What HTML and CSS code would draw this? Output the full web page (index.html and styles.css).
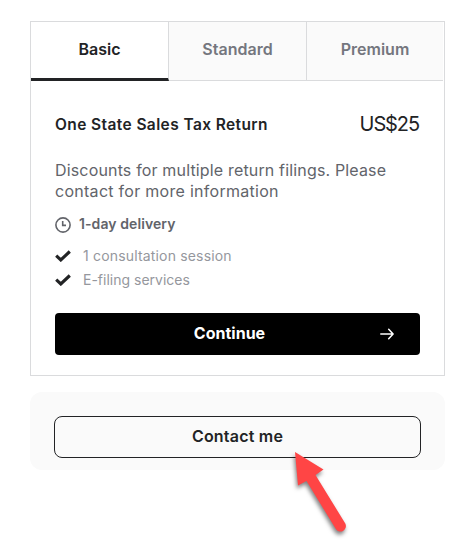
FILE: index.html
```html
<!DOCTYPE html>
<html lang="en">
<head>
<meta charset="utf-8">
<title>Package options</title>
<link rel="stylesheet" href="styles.css">
</head>
<body>
<main class="page">
  <section class="card">
    <nav class="tabs">
      <button class="tab active">Basic</button>
      <button class="tab">Standard</button>
      <button class="tab">Premium</button>
    </nav>
    <div class="content">
      <header class="heading">
        <h1>One State Sales Tax Return</h1>
        <span class="price">US$25</span>
      </header>
      <p class="description">Discounts for multiple return filings. Please<br><span>contact for more information</span></p>
      <div class="delivery">
        <svg width="16" height="16" viewBox="0 0 16 16" fill="none" stroke="#62646a" stroke-width="1.6"><circle cx="8" cy="8" r="7.1"/><path d="M7.7 4v4.4H11"/></svg>
        <span>1-day delivery</span>
      </div>
      <ul class="features">
        <li><svg width="16" height="12" viewBox="0 0 16 12" fill="none" stroke="#222325" stroke-width="3.1"><path d="M1.2 5.7 5.8 10 14.8 1.5"/></svg><span class="session">1 consultation session</span></li>
        <li><svg width="16" height="12" viewBox="0 0 16 12" fill="none" stroke="#222325" stroke-width="3.1"><path d="M1.2 5.7 5.8 10 14.8 1.5"/></svg><span>E-filing services</span></li>
      </ul>
      <button class="continue"><span>Continue</span>
        <svg class="next" width="14" height="12" viewBox="0 0 14 12" fill="none" stroke="#fff" stroke-width="1.5" stroke-linejoin="round" stroke-linecap="round"><path d="M.8 6h12M8.7 1.2 13.1 6l-4.4 4.8"/></svg>
      </button>
    </div>
  </section>
  <section class="contact-panel">
    <button class="contact">Contact me</button>
  </section>
  <svg class="pointer" width="80" height="100" viewBox="285 445 80 100"><path d="M295 452 323.5 469.5 315.5 475 345.3 523.5A5.5 5.5 0 0 1 336 529.3L306.5 481 298 485.5Z" fill="#ff4545"/></svg>
</main>
</body>
</html>
```
FILE: styles.css
```css
* { box-sizing: border-box; }
body { margin: 0; background: #fff; color: #222325; font-family: Inter, "Liberation Sans", sans-serif; }
button { font: inherit; color: inherit; border: 0; margin: 0; padding: 0; }
.page { position: relative; width: 467px; height: 550px; padding: 21px 22px 0 30px; overflow: hidden; }
.card { height: 355px; border: 1px solid #dadbdd; }
.tabs { display: grid; grid-template-columns: 138px 138px 136px; height: 59px; }
.tab { background: #fafafa; color: #74767e; border-right: 1px solid #dadbdd; border-bottom: 1px solid #dadbdd; font-size: 16px; font-weight: 600; padding-bottom: 4px; }
.tab:last-child { border-right: 0; }
.tab.active { background: #fff; color: #222325; border-bottom: 3px solid #222325; padding-bottom: 2px; }
.content { padding: 32px 24px 0; }
.heading { display: flex; align-items: center; justify-content: space-between; height: 24px; }
h1 { margin: 0; font-size: 15.5px; line-height: 24px; font-weight: 600; letter-spacing: .4px; white-space: nowrap; }
.price { margin-right: 1px; padding-bottom: 2px; font-size: 20px; line-height: 24px; letter-spacing: -1.1px; }
.description { margin: 23px 0 0; color: #62646a; font-size: 16px; line-height: 21px; letter-spacing: .16px; white-space: nowrap; }
.description span { letter-spacing: .28px; }
.delivery { display: flex; align-items: center; gap: 8px; height: 20px; margin-top: 13px; font-size: 14px; font-weight: 600; letter-spacing: .08px; color: #62646a; }
.delivery span { padding-bottom: 3px; }
.features { list-style: none; margin: 9px 0 0; padding: 0; color: #95979d; font-size: 14px; }
.features li { display: flex; align-items: center; gap: 12px; height: 24px; }
.features span { padding-bottom: 1px; }
.features .session { letter-spacing: .17px; }
.continue { display: grid; grid-template-columns: 26px 1fr 26px; align-items: center; width: 365px; height: 42px; margin-top: 21px; border-radius: 4px; background: #000; color: #fff; font-size: 16px; font-weight: 700; }
.continue span { grid-column: 2; grid-row: 1; margin-right: 16px; padding-bottom: 2px; }
.continue .next { grid-column: 2 / 4; grid-row: 1; justify-self: end; margin-right: 26px; }
.contact-panel { height: 78px; margin-top: 16px; padding: 24px; border-radius: 12px; background: #fafafa; }
.contact { width: 367px; height: 42px; padding-bottom: 2px; border: 1px solid #222325; border-radius: 8px; background: #fafafa; font-size: 16px; font-weight: 600; letter-spacing: .2px; }
.pointer { position: absolute; left: 285px; top: 445px; filter: drop-shadow(-1px 3px 2px rgba(0, 0, 0, .5)); }
```
